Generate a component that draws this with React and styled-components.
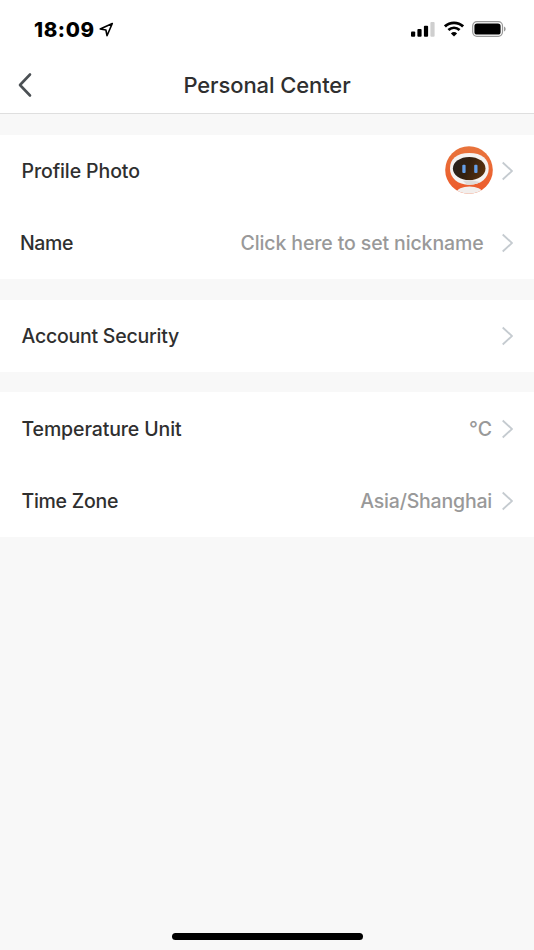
import React from 'react'
import styled, { createGlobalStyle } from 'styled-components'

const pageColor = '#f8f8f8'
const textColor = '#2f2f2f'
const mutedColor = '#999999'

function App() {
  return (
    <>
      <GlobalStyle />
      <Screen>
        <StatusBar>
          <Clock>
            <Time>18:09</Time>
            <LocationArrow />
          </Clock>
          <Indicators>
            <Signal />
            <Wifi />
            <Battery />
          </Indicators>
        </StatusBar>
        <Header>
          <BackButton aria-label="Back">
            <svg width="14" height="26" viewBox="0 0 14 26">
              <path d="M12 2.5L2 13l10 10.5" fill="none" stroke="#4b5054" strokeWidth="2.6" strokeLinecap="round" strokeLinejoin="round" />
            </svg>
          </BackButton>
          <Title>Personal Center</Title>
        </Header>
        <Settings>
          <Group>
            <Row>
              <Label $spacing="-0.1px">Profile Photo</Label>
              <Robot />
              <Chevron />
            </Row>
            <Row $indent="20px">
              <Label $spacing="-0.4px">Name</Label>
              <Value $gap="17.5px" $spacing="-0.12px">Click here to set nickname</Value>
              <Chevron />
            </Row>
          </Group>
          <Group>
            <Row>
              <Label $spacing="-0.24px">Account Security</Label>
              <Chevron />
            </Row>
          </Group>
          <Group>
            <Row>
              <Label $spacing="-0.12px">Temperature Unit</Label>
              <Value>°C</Value>
              <Chevron />
            </Row>
            <Row>
              <Label $spacing="-0.28px">Time Zone</Label>
              <Value $spacing="-0.2px">Asia/Shanghai</Value>
              <Chevron />
            </Row>
          </Group>
        </Settings>
        <HomeIndicator />
      </Screen>
    </>
  )
}

const LocationArrow = () => (
  <svg width="15" height="15" viewBox="0 0 15 15">
    <path d="M13.3 1.5L1.2 7l5.7 1L8 13.7z" fill="none" stroke="#000" strokeWidth="1.6" strokeLinejoin="round" />
  </svg>
)

const Signal = () => (
  <svg width="24" height="16" viewBox="0 0 24 16">
    <rect x="0" y="10.6" width="4.2" height="5.2" rx="1" />
    <rect x="6.4" y="8.1" width="4.2" height="7.7" rx="1" />
    <rect x="12.9" y="4.7" width="4.2" height="11.1" rx="1" />
    <rect x="19.4" y="0.9" width="4.2" height="14.9" rx="1" fill="#cfcfcf" />
  </svg>
)

const Wifi = () => (
  <svg width="20" height="16" viewBox="0 0 20 16">
    <path d="M.9 5.5C6 .6 14 .6 19.1 5.5" fill="none" stroke="#000" strokeWidth="2.9" />
    <path d="M4.4 9.1C7.7 6 12.3 6 15.6 9.1" fill="none" stroke="#000" strokeWidth="2.7" />
    <path d="M10 15.6l-3.1-3.2q3.1-2.6 6.2 0z" />
  </svg>
)

const Battery = () => (
  <svg width="34" height="16" viewBox="0 0 34 16">
    <rect x="0.7" y="0.7" width="29.8" height="14.6" rx="4.2" fill="#fff" stroke="#999" strokeWidth="1.2" />
    <rect x="2.4" y="2.4" width="26.2" height="11.2" rx="2.6" />
    <path d="M32 5.5c2.2.7 2.2 4.300 0 5z" fill="#999" />
  </svg>
)

const Chevron = () => (
  <svg width="12" height="20" viewBox="0 0 12 20">
    <path d="M1.700 1.500L11 10l-9.300 8.500" fill="none" stroke="#c5cbd0" strokeWidth="1.8" />
  </svg>
)

const Robot = () => (
  <Avatar viewBox="0 0 48 48">
    <defs>
      <clipPath id="disc">
        <circle cx="24" cy="24" r="23.8" />
      </clipPath>
      <linearGradient id="shell" x1="0" y1="0" x2="0" y2="1">
        <stop offset="0" stopColor="#e8743c" />
        <stop offset="1" stopColor="#ed5a2b" />
      </linearGradient>
      <linearGradient id="visor" x1="0" y1="0.3" x2="1" y2="0.6">
        <stop offset="0" stopColor="#29221e" />
        <stop offset="0.45" stopColor="#33200f" />
        <stop offset="1" stopColor="#5b310d" />
      </linearGradient>
    </defs>
    <g clipPath="url(#disc)">
      <rect width="48" height="48" fill="url(#shell)" />
      <ellipse cx="24.5" cy="46.8" rx="13" ry="6.3" fill="#f2eeec" />
      <path d="M24.300 7C37 7 43.700 13 43.700 22.500S36 38.800 24.300 38.800 5 32 5 22.500 11.600 7 24.300 7z" fill="#f5f3f2" />
      <path d="M18 35l4 3.700q9 .3 13-2.700l-10-2z" fill="#dedbd9" />
      <ellipse cx="24.2" cy="22.5" rx="16.3" ry="11.6" fill="url(#visor)" />
      <rect x="17.3" y="18.7" width="3.3" height="8.2" rx="1" fill="#659fe8" />
      <rect x="29.2" y="18.7" width="3.3" height="8.2" rx="1" fill="#659fe8" />
    </g>
  </Avatar>
)

const GlobalStyle = createGlobalStyle`
    *{
        box-sizing: border-box;
    }
    body{
        margin: 0;
        background-color: ${pageColor};
        font-family: Inter, "Liberation Sans", sans-serif;
    }
    svg{
        display: block;
        flex-shrink: 0;
    }
`;
const Screen = styled.div`
    height: 950px;
    display: flex;
    flex-direction: column;
    background-color: ${pageColor};
`;
const StatusBar = styled.div`
    height: 58px;
    padding: 0 28px 0 34px;
    display: flex;
    align-items: center;
    justify-content: space-between;
    background-color: white;
`;
const Clock = styled.div`
    display: flex;
    align-items: center;
    gap: 4.5px;
`;
const Time = styled.span`
    padding-top: 1px;
    font-size: 20.5px;
    font-weight: 800;
    line-height: 24px;
    letter-spacing: 0.6px;
    color: black;
`;
const Indicators = styled.div`
    display: flex;
    align-items: center;
    gap: 8.5px;
`;
const Header = styled.header`
    height: 56px;
    padding: 0 18px 1px;
    display: grid;
    grid-template-columns: 14px 1fr 14px;
    align-items: center;
    background-color: white;
    border-bottom: 1px solid #dfdfdf;
`;
const BackButton = styled.button`
    border: none;
    padding: 0;
    background: none;
`;
const Title = styled.h1`
    margin: 0;
    font-size: 22px;
    font-weight: 500;
    line-height: 28px;
    letter-spacing: -0.1px;
    text-align: center;
    color: ${textColor};
`;
const Settings = styled.main`
    padding-top: 20.5px;
    flex: 1;
    display: flex;
    flex-direction: column;
    gap: 20.5px;
`;
const Group = styled.section`
    background-color: white;
`;
const Row = styled.div`
    height: 72.3px;
    padding: 0 21px 0 ${({ $indent }) => $indent || '21.5px'};
    display: flex;
    align-items: center;
`;
const Label = styled.span`
    margin-right: auto;
    font-size: 19.5px;
    font-weight: 500;
    line-height: 24px;
    letter-spacing: ${({ $spacing }) => $spacing || '0'};
    color: ${textColor};
`;
const Value = styled.span`
    margin-right: ${({ $gap }) => $gap || '9px'};
    font-size: 19.5px;
    font-weight: 500;
    line-height: 24px;
    letter-spacing: ${({ $spacing }) => $spacing || '0'};
    color: ${mutedColor};
`;
const Avatar = styled.svg`
    width: 48px;
    height: 48px;
    margin: 0 8px 1px 0;
`;
const HomeIndicator = styled.div`
    width: 191px;
    height: 7px;
    margin: 0 auto 10.5px;
    border-radius: 4px;
    background-color: black;
`;

export default App
